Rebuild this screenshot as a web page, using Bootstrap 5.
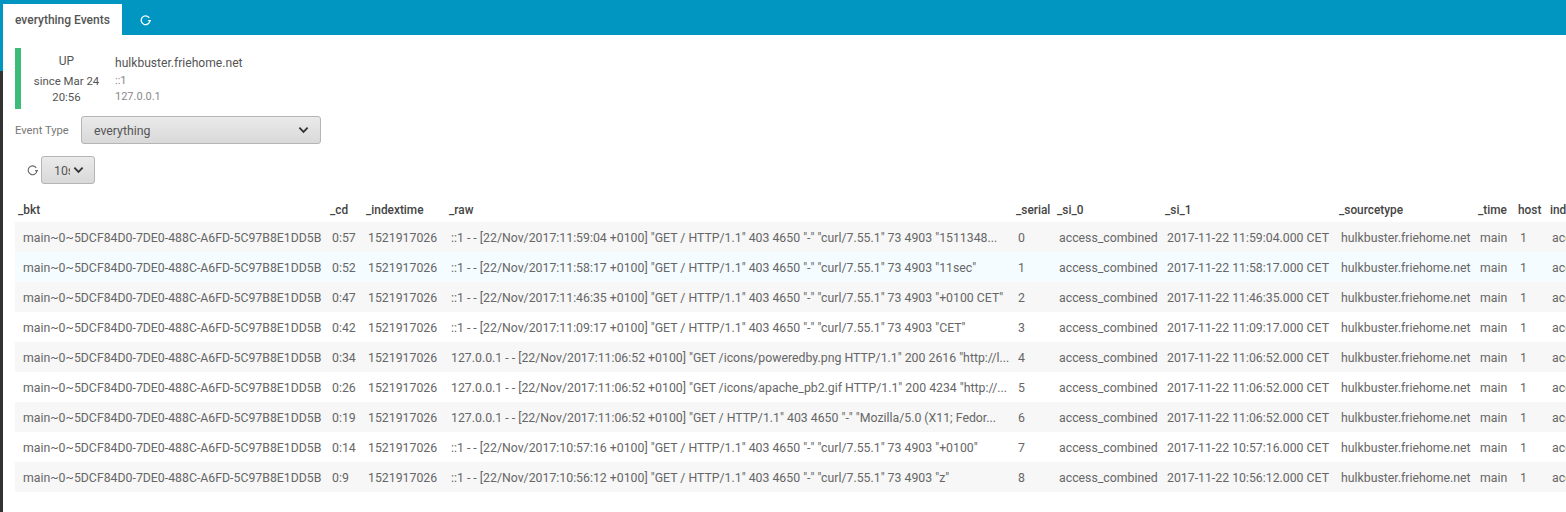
<!DOCTYPE html>
<html lang="en">
<head>
<meta charset="utf-8">
<title>everything Events</title>
<link rel="stylesheet" href="https://cdn.jsdelivr.net/npm/bootstrap@5.3.0/dist/css/bootstrap.min.css">
<style>
html,body{height:512px;overflow:hidden}
body{font-family:Roboto,"Liberation Sans",sans-serif;font-size:12.3px;color:#666;background:#fff}
.shell{height:512px}
.rail{width:3px;background:#333;flex:none}
.rail-top{height:71px;background:#0096c1}
.workspace{min-width:0}
.topbar{height:35px;background:#0096c1;padding-top:4px}
.tab-active{width:119px;height:31px;background:#fff;color:#555;font-size:12px;font-weight:500;line-height:32px;padding-left:12px}
.tab-refresh{margin-left:18px;height:31px;color:#fff;padding-top:1px}
.pane{padding:13px 0 0 12px}
.status-box{height:61px;border-left:6px solid #3dbb78}
.status-side{width:94px;padding-right:3px;text-align:center;font-size:11.4px;line-height:16px;color:#555;padding-top:5px}
.status-up{font-size:12px;margin-bottom:4px}
.status-info{padding:7px 0 0 0;font-size:11px;line-height:16px;color:#888}
.host-name{font-size:12.1px;color:#555;margin-bottom:2px;line-height:16px}
.field-row{margin-top:7px}
.field-label{width:66px;font-size:11.2px;color:#777;padding-top:2px}
.pick{appearance:none;height:28px;border:1px solid #b5b5b5;border-radius:3px;color:#555;font:12.3px Roboto,sans-serif;background-color:#e4e4e4;background-image:url("data:image/svg+xml,%3Csvg xmlns='http://www.w3.org/2000/svg' viewBox='0 0 12 8'%3E%3Cpath d='M1.5 1.5 6 6l4.5-4.5' fill='none' stroke='%23333' stroke-width='2'/%3E%3C/svg%3E"),linear-gradient(#eaeaea,#d9d9d9);background-repeat:no-repeat;background-size:11px 8px,100% 100%;background-position:right 11px center,0 0;padding:2px 30px 0 12px;outline:none}
.pick-wide{width:240px}
.pick-short{width:54px;padding:2px 24px 0 12px;background-position:right 10px center,0 0}
.refresh-row{margin:12px 0 0 12px}
.refresh-row svg{margin-right:3px}
.table-clip{margin-top:13px;overflow:hidden}
.event-grid{table-layout:fixed;width:1640px;border-collapse:collapse;white-space:nowrap}
.event-grid th{font-weight:500;font-size:11.85px;color:#444;height:25px;padding:5px 0 2px 3px;text-align:left}
.event-grid td{height:30px;padding:2px 0 0 5px;overflow:hidden}
.event-grid td:first-child{padding-left:8px}
.event-grid tr:nth-child(odd) td{background:#f7f7f7}
.event-grid tr:nth-child(even) td{background:#fff}
.event-grid tr.row-hover td{background:#f5fcff}
.w1{width:312px}.w2{width:36px}.w3{width:83px}.w4{width:567px}.w5{width:41px}.w6{width:108px}.w7{width:174px}.w8{width:139px}.w9{width:40px}.w10{width:32px}.w11{width:108px}
</style>
</head>
<body>
<div class="shell d-flex">
  <div class="rail"><div class="rail-top"></div></div>
  <div class="workspace flex-grow-1">
    <div class="topbar d-flex">
      <div class="tab-active">everything Events</div>
      <div class="tab-refresh d-flex align-items-center">
        <svg width="11" height="11" viewBox="0 0 10 10"><path d="M8.4 2.6A4 4 0 1 0 9 5.5" fill="none" stroke="#fff" stroke-width="1.2"/><path d="M7 4.6h3.2L8.6 6.6z" fill="#fff"/></svg>
      </div>
    </div>
    <div class="pane">
      <div class="status-box d-flex">
        <div class="status-side"><div class="status-up">UP</div><div>since Mar 24</div><div>20:56</div></div>
        <div class="status-info"><div class="host-name">hulkbuster.friehome.net</div><div>::1</div><div>127.0.0.1</div></div>
      </div>
      <div class="field-row d-flex align-items-center">
        <label class="field-label" for="etype">Event Type</label>
        <select id="etype" class="pick pick-wide"><option>everything</option></select>
      </div>
      <div class="refresh-row d-flex align-items-center">
        <svg width="11" height="11" viewBox="0 0 10 10"><path d="M8.4 2.6A4 4 0 1 0 9 5.5" fill="none" stroke="#666" stroke-width="1"/><path d="M7 4.6h3.2L8.6 6.6z" fill="#666"/></svg>
        <select class="pick pick-short" aria-label="Refresh interval"><option>10s</option></select>
      </div>
      <div class="table-clip">
        <table class="event-grid">
          <colgroup><col class="w1"><col class="w2"><col class="w3"><col class="w4"><col class="w5"><col class="w6"><col class="w7"><col class="w8"><col class="w9"><col class="w10"><col class="w11"></colgroup>
          <thead><tr><th>_bkt</th><th>_cd</th><th>_indextime</th><th>_raw</th><th>_serial</th><th>_si_0</th><th>_si_1</th><th>_sourcetype</th><th>_time</th><th>host</th><th>index</th></tr></thead>
          <tbody>
            <tr><td>main~0~5DCF84D0-7DE0-488C-A6FD-5C97B8E1DD5B</td><td>0:57</td><td>1521917026</td><td>::1 - - [22/Nov/2017:11:59:04 +0100] "GET / HTTP/1.1" 403 4650 "-" "curl/7.55.1" 73 4903 "1511348...</td><td>0</td><td>access_combined</td><td>2017-11-22 11:59:04.000 CET</td><td>hulkbuster.friehome.net</td><td>main</td><td>1</td><td>access</td></tr>
            <tr class="row-hover"><td>main~0~5DCF84D0-7DE0-488C-A6FD-5C97B8E1DD5B</td><td>0:52</td><td>1521917026</td><td>::1 - - [22/Nov/2017:11:58:17 +0100] "GET / HTTP/1.1" 403 4650 "-" "curl/7.55.1" 73 4903 "11sec"</td><td>1</td><td>access_combined</td><td>2017-11-22 11:58:17.000 CET</td><td>hulkbuster.friehome.net</td><td>main</td><td>1</td><td>access</td></tr>
            <tr><td>main~0~5DCF84D0-7DE0-488C-A6FD-5C97B8E1DD5B</td><td>0:47</td><td>1521917026</td><td>::1 - - [22/Nov/2017:11:46:35 +0100] "GET / HTTP/1.1" 403 4650 "-" "curl/7.55.1" 73 4903 "+0100 CET"</td><td>2</td><td>access_combined</td><td>2017-11-22 11:46:35.000 CET</td><td>hulkbuster.friehome.net</td><td>main</td><td>1</td><td>access</td></tr>
            <tr><td>main~0~5DCF84D0-7DE0-488C-A6FD-5C97B8E1DD5B</td><td>0:42</td><td>1521917026</td><td>::1 - - [22/Nov/2017:11:09:17 +0100] "GET / HTTP/1.1" 403 4650 "-" "curl/7.55.1" 73 4903 "CET"</td><td>3</td><td>access_combined</td><td>2017-11-22 11:09:17.000 CET</td><td>hulkbuster.friehome.net</td><td>main</td><td>1</td><td>access</td></tr>
            <tr><td>main~0~5DCF84D0-7DE0-488C-A6FD-5C97B8E1DD5B</td><td>0:34</td><td>1521917026</td><td>127.0.0.1 - - [22/Nov/2017:11:06:52 +0100] "GET /icons/poweredby.png HTTP/1.1" 200 2616 "http://l...</td><td>4</td><td>access_combined</td><td>2017-11-22 11:06:52.000 CET</td><td>hulkbuster.friehome.net</td><td>main</td><td>1</td><td>access</td></tr>
            <tr><td>main~0~5DCF84D0-7DE0-488C-A6FD-5C97B8E1DD5B</td><td>0:26</td><td>1521917026</td><td>127.0.0.1 - - [22/Nov/2017:11:06:52 +0100] "GET /icons/apache_pb2.gif HTTP/1.1" 200 4234 "http://...</td><td>5</td><td>access_combined</td><td>2017-11-22 11:06:52.000 CET</td><td>hulkbuster.friehome.net</td><td>main</td><td>1</td><td>access</td></tr>
            <tr><td>main~0~5DCF84D0-7DE0-488C-A6FD-5C97B8E1DD5B</td><td>0:19</td><td>1521917026</td><td>127.0.0.1 - - [22/Nov/2017:11:06:52 +0100] "GET / HTTP/1.1" 403 4650 "-" "Mozilla/5.0 (X11; Fedor...</td><td>6</td><td>access_combined</td><td>2017-11-22 11:06:52.000 CET</td><td>hulkbuster.friehome.net</td><td>main</td><td>1</td><td>access</td></tr>
            <tr><td>main~0~5DCF84D0-7DE0-488C-A6FD-5C97B8E1DD5B</td><td>0:14</td><td>1521917026</td><td>::1 - - [22/Nov/2017:10:57:16 +0100] "GET / HTTP/1.1" 403 4650 "-" "curl/7.55.1" 73 4903 "+0100"</td><td>7</td><td>access_combined</td><td>2017-11-22 10:57:16.000 CET</td><td>hulkbuster.friehome.net</td><td>main</td><td>1</td><td>access</td></tr>
            <tr><td>main~0~5DCF84D0-7DE0-488C-A6FD-5C97B8E1DD5B</td><td>0:9</td><td>1521917026</td><td>::1 - - [22/Nov/2017:10:56:12 +0100] "GET / HTTP/1.1" 403 4650 "-" "curl/7.55.1" 73 4903 "z"</td><td>8</td><td>access_combined</td><td>2017-11-22 10:56:12.000 CET</td><td>hulkbuster.friehome.net</td><td>main</td><td>1</td><td>access</td></tr>
          </tbody>
        </table>
      </div>
    </div>
  </div>
</div>
<script src="https://cdn.jsdelivr.net/npm/bootstrap@5.3.0/dist/js/bootstrap.bundle.min.js"></script>
</body>
</html>
